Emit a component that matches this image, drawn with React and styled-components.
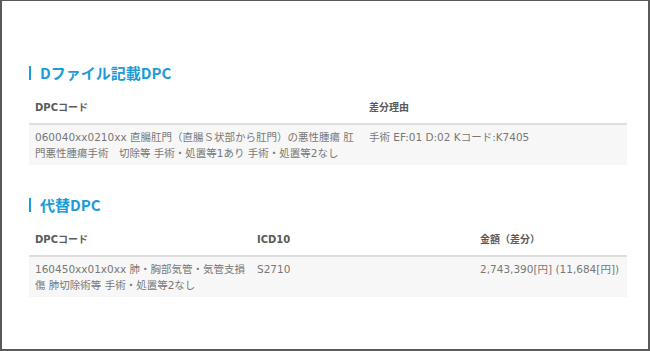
import React from "react";
import styled, { createGlobalStyle } from "styled-components";

const Global = createGlobalStyle`
  html, body { margin: 0; padding: 0; background: #fff; }
  body { font-family: "Noto Sans CJK JP", "Noto Sans", sans-serif; }
  * { box-sizing: border-box; }
`;

const Frame = styled.div`
  width: 650px;
  height: 351px;
  border-style: solid;
  border-color: #5a5a5a;
  border-width: 1px 2px 2px 2px;
  padding: 62px 21px 0 27px;
  background: #fff;
`;

const Section = styled.section`
  & + & { margin-top: 30px; }
`;

const Heading = styled.h2`
  margin: 0 0 9px 0;
  display: flex;
  align-items: center;
  gap: 9px;
  font-family: "Noto Sans CJK JP", sans-serif;
  font-size: 15px;
  line-height: 20px;
  font-weight: 700;
  color: #1b9bd8;
  &::before {
    content: "";
    display: block;
    width: 2px;
    height: 14px;
    background: #1b9bd8;
  }
`;

const Table = styled.table`
  width: 100%;
  border-collapse: collapse;
  table-layout: fixed;
`;

const Th = styled.th`
  text-align: left;
  font-family: "DejaVu Sans", "Noto Sans CJK JP", sans-serif;
  font-size: 10px;
  line-height: 16px;
  font-weight: 700;
  color: #5a5a5a;
  padding: 8px 4px 7px 6px;
  border-bottom: 2px solid #dedede;
  width: ${(p) => p.$w || "auto"};
`;

const Row = styled.tr`
  background: #f7f7f7;
`;

const Td = styled.td`
  vertical-align: top;
  font-family: "DejaVu Sans", "Noto Sans CJK JP", sans-serif;
  font-size: 10.5px;
  line-height: 16px;
  color: #777;
  padding: 4px 4px 4px 6px;
  height: 40px;
`;

export default function App() {
  return (
    <>
      <Global />
      <Frame>
        <Section>
          <Heading>Dファイル記載DPC</Heading>
          <Table>
            <thead>
              <tr>
                <Th $w="334px">DPCコード</Th>
                <Th>差分理由</Th>
              </tr>
            </thead>
            <tbody>
              <Row>
                <Td>060040xx0210xx 直腸肛門（直腸Ｓ状部から肛門）の悪性腫瘍 肛門悪性腫瘍手術　切除等 手術・処置等1あり 手術・処置等2なし</Td>
                <Td>手術 EF:01 D:02 Kコード:K7405</Td>
              </Row>
            </tbody>
          </Table>
        </Section>
        <Section>
          <Heading>代替DPC</Heading>
          <Table>
            <thead>
              <tr>
                <Th $w="222px">DPCコード</Th>
                <Th $w="223px">ICD10</Th>
                <Th>金額（差分）</Th>
              </tr>
            </thead>
            <tbody>
              <Row>
                <Td>160450xx01x0xx 肺・胸部気管・気管支損傷 肺切除術等 手術・処置等2なし</Td>
                <Td>S2710</Td>
                <Td>2,743,390[円] (11,684[円])</Td>
              </Row>
            </tbody>
          </Table>
        </Section>
      </Frame>
    </>
  );
}
